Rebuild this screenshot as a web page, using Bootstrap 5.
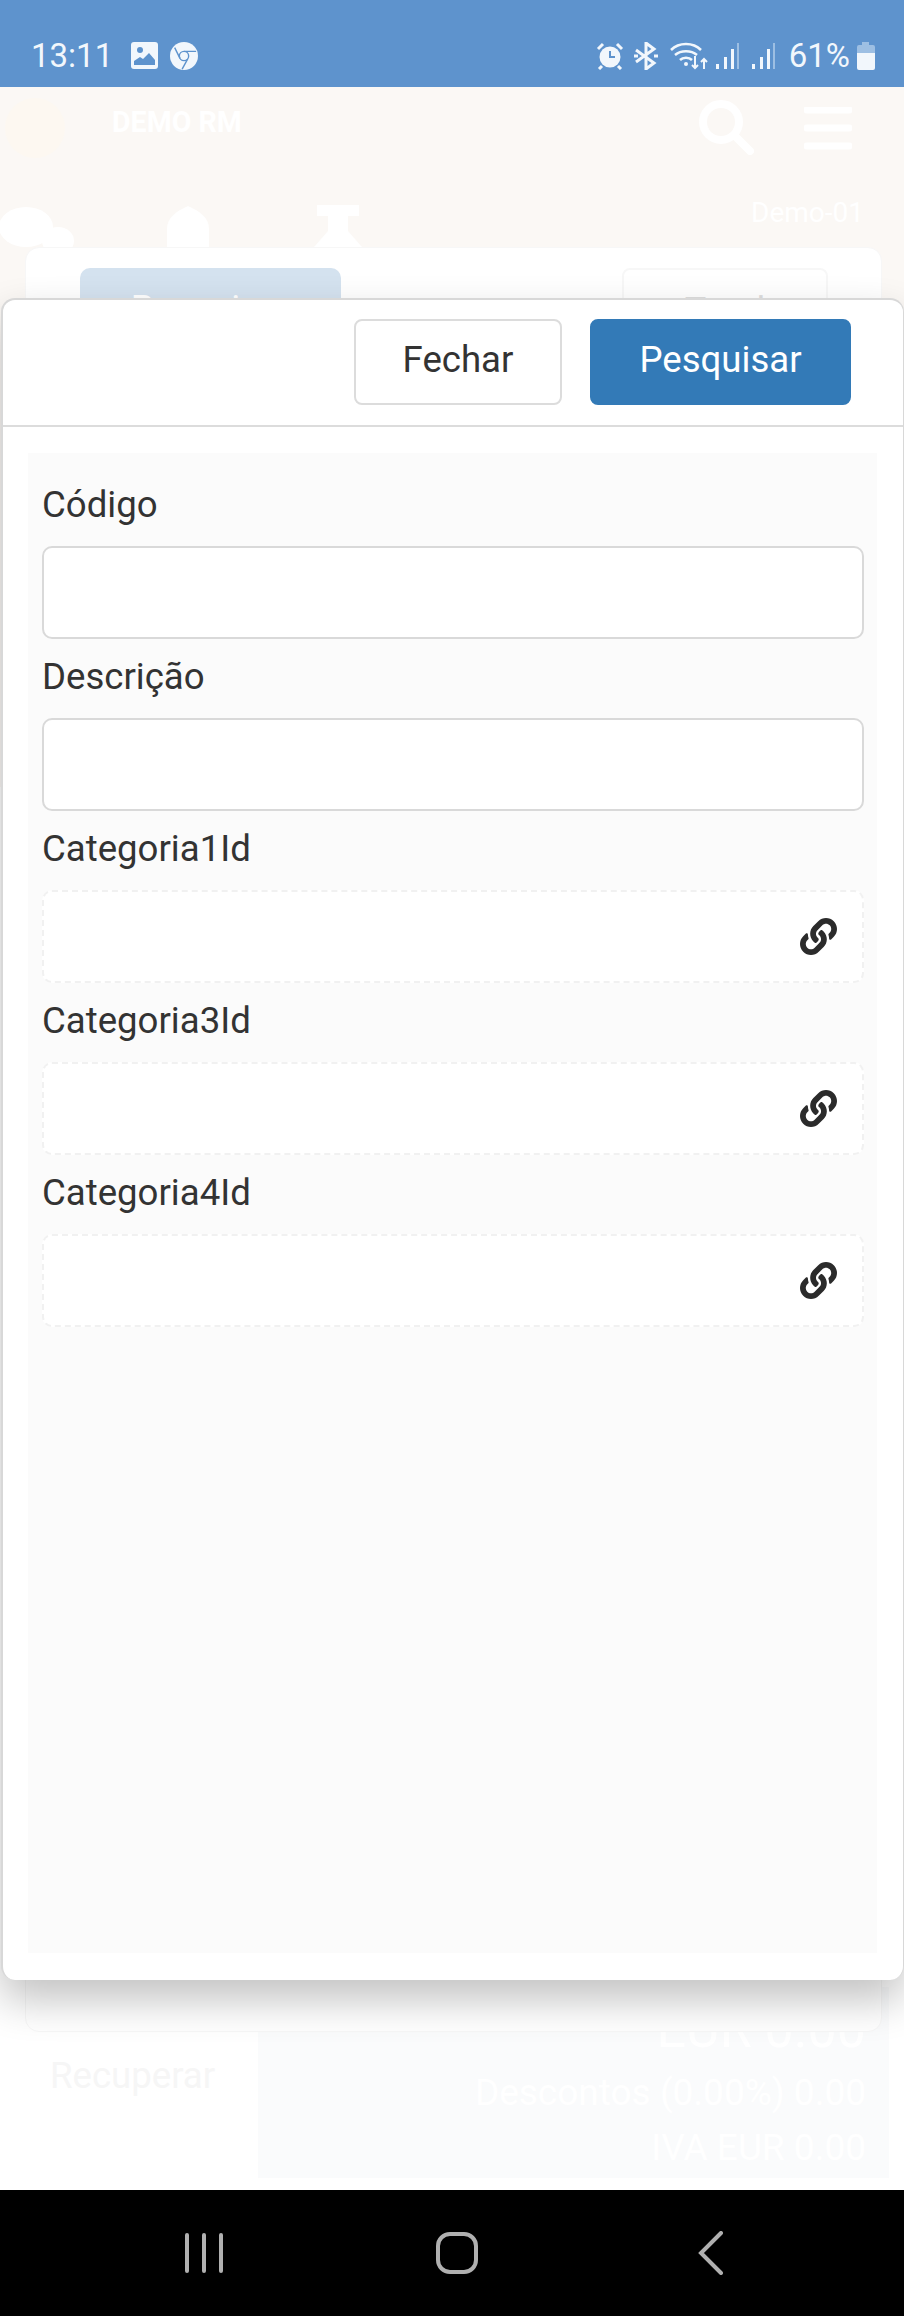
<!DOCTYPE html>
<html lang="pt">

<head>
    <meta charset="UTF-8" />
    <meta name="viewport" content="width=device-width, initial-scale=1" />
    <title>Pesquisar</title>
    <link href="https://cdn.jsdelivr.net/npm/bootstrap@5.3.0/dist/css/bootstrap.min.css" rel="stylesheet" />
    <style>
        html, body { height: 100%; }
        body { font-family: Roboto, "Liberation Sans", sans-serif; background: #fff; color: #333; overflow: hidden; }
        .phone-screen { width: 904px; height: 2316px; }
        .status-strip { height: 87px; background: #5e93cd; color: #f2f7fc; padding: 37px 28px 0 31px; font-size: 33px; line-height: 38px; }
        .status-strip svg { margin-top: 5px; flex-shrink: 0; }
        .st-image { margin-left: 18px; }
        .st-chrome { margin-left: 12px; }
        .st-bt { margin-left: 10px; }
        .st-wifi { margin-left: 12px; }
        .st-sig1 { margin-left: 7px; }
        .st-sig2 { margin-left: 12px; }
        .st-pct { margin-left: 14px; }
        .st-batt { margin-left: 6px; }

        .app-page { height: 2103px; }
        .app-top { height: 700px; background: #fbf8f5; color: #fff; }
        .app-title { left: 112px; top: 14px; font-size: 28.6px; font-weight: 700; }
        .demo-tag { right: 40px; top: 105px; font-size: 28px; }
        .bg-logo { left: 5px; top: 11px; width: 60px; height: 60px; border-radius: 50%; background: #fdf8f1; }
        .bg-search { left: 698px; top: 12px; }
        .bg-menu { left: 804px; top: 20px; }
        .bg-bubble { left: 0; top: 120px; }
        .bg-bell { left: 165px; top: 118px; }
        .bg-cup { left: 312px; top: 118px; }
        .bg-card { left: 25px; right: 22px; top: 160px; height: 1785px; background: #fff; border: 1px solid #f7f7f7; border-radius: 14px; }
        .bg-tab-on, .bg-tab-off { top: 20px; height: 70px; font-size: 36px; text-align: center; padding-top: 14px; }
        .bg-tab-on { left: 54px; width: 261px; background: #d4e2ef; border-radius: 10px 10px 0 0; color: #fff; }
        .bg-tab-off { left: 596px; width: 206px; border: 2px solid #f7f7f7; border-radius: 8px; color: #ddd; }
        .bg-totals { left: 258px; right: 15px; top: 1900px; height: 191px; background: #fafbfc; color: #fff; font-size: 37px; line-height: 55px; padding: 0 23px 3px 0; }
        .bg-total-main { font-size: 52px; margin-bottom: 8px; }
        .bg-recover { left: 50px; top: 1962px; font-size: 36.6px; color: #f6f6f6; }

        .search-sheet { left: 1px; right: 0; top: 211px; height: 1682px; background: #fff; border: 2px solid #d8d8d8; border-bottom: 0; border-right-width: 1px; border-radius: 14px; box-shadow: 0 20px 42px rgba(0, 0, 0, .24); }
        .sheet-head { height: 127px; padding: 19px 52px 0 0; border-bottom: 2px solid #dcdcdc; gap: 28px; }
        .sheet-btn { height: 86px; font-size: 36.6px; border-radius: 8px; padding-top: 3px; padding-bottom: 7px; }
        .btn-close-sheet { width: 208px; background: #fff; border: 2px solid #dcdcdc; color: #333; }
        .btn-search-sheet { width: 261px; background: #337ab7; border: 2px solid #337ab7; color: #fff; }
        .sheet-body { margin: 26px 26px 0 25px; height: 1500px; background: #fbfbfb; padding: 0 13px 0 14px; }
        .field-group { height: 172px; }
        .field-label { font-size: 36.6px; line-height: 40px; color: #333; height: 80px; padding-top: 32px; margin-bottom: 13px; }
        .field-input { height: 93px; border: 2px solid #d9d9d9; border-radius: 10px; background: #fff; box-shadow: none; }
        .field-lookup { height: 93px; border: 2px dashed #f1f1f1; border-radius: 10px; background: #fff; padding-right: 25px; }

        .nav-strip { height: 126px; background: #000; padding-left: 183px; }
        .nav-home { margin-left: 211px; }
        .nav-back { margin-left: 220px; }
    </style>
</head>

<body>
    <svg class="d-none">
        <symbol id="link-glyph" viewBox="0 0 512 512"><path d="M326.612 185.391c59.747 59.809 58.927 155.698.36 214.59-.11.12-.24.25-.36.37l-67.2 67.2c-59.27 59.27-155.699 59.262-214.96 0-59.27-59.26-59.27-155.7 0-214.96l37.106-37.106c9.84-9.84 26.786-3.3 27.294 10.606.648 17.722 3.826 35.527 9.69 52.721 1.986 5.822.567 12.262-3.783 16.612l-13.087 13.087c-28.026 28.026-28.905 73.66-1.155 101.96 28.024 28.579 74.086 28.749 102.325.51l67.2-67.19c28.191-28.191 28.073-73.757 0-101.83-3.701-3.694-7.429-6.564-10.341-8.569a16.037 16.037 0 0 1-6.947-12.606c-.396-10.567 3.348-21.456 11.698-29.806l21.054-21.055c5.521-5.521 14.182-6.199 20.584-1.731a152.482 152.482 0 0 1 20.522 17.197zM467.547 44.449c-59.261-59.262-155.69-59.27-214.96 0l-67.2 67.2c-.12.12-.25.25-.36.37-58.566 58.892-59.387 154.781.36 214.59a152.454 152.454 0 0 0 20.521 17.196c6.402 4.468 15.064 3.789 20.584-1.731l21.054-21.055c8.35-8.35 12.094-19.239 11.698-29.806a16.037 16.037 0 0 0-6.947-12.606c-2.912-2.005-6.64-4.875-10.341-8.569-28.073-28.073-28.191-73.639 0-101.83l67.2-67.19c28.239-28.239 74.3-28.069 102.325.51 27.75 28.3 26.872 73.934-1.155 101.96l-13.087 13.087c-4.35 4.35-5.769 10.79-3.783 16.612 5.864 17.194 9.042 34.999 9.69 52.721.509 13.906 17.454 20.446 27.294 10.606l37.106-37.106c59.271-59.259 59.271-155.699.001-214.959z" fill="#2b2b2b" /></symbol>
    </svg>

    <div class="phone-screen d-flex flex-column position-relative">
        <div class="status-strip d-flex justify-content-between">
            <div class="d-flex align-items-start">
                <span>13:11</span>
                <svg class="st-image" width="27" height="27" viewBox="0 0 27 27"><rect width="27" height="27" rx="3" fill="#f2f7fc" /><circle cx="9" cy="8" r="3" fill="#5e93cd" /><path d="M3 23v-4l6-4 3 2 6-6 6 7v5z" fill="#5e93cd" /></svg>
                <svg class="st-chrome" width="28" height="28" viewBox="0 0 30 30"><circle cx="15" cy="15" r="15" fill="#f2f7fc" /><circle cx="15" cy="15" r="5" fill="none" stroke="#5e93cd" stroke-width="1.5" /><path d="M15 10h13M10.7 17.5 5 6M19 18l-6 11" stroke="#5e93cd" stroke-width="1.5" fill="none" /></svg>
            </div>
            <div class="d-flex align-items-start">
                <svg width="28" height="28" viewBox="0 0 28 28"><circle cx="14" cy="15" r="10.5" fill="#f2f7fc" /><path d="M14 9v6h5" stroke="#5e93cd" stroke-width="2" fill="none" /><path d="M2 7l5-5M26 7l-5-5M6 24l-3 3M22 24l3 3" stroke="#f2f7fc" stroke-width="3" /></svg>
                <svg class="st-bt" width="24" height="28" viewBox="0 0 24 28"><path d="M2 8l18 13-8 6V1l8 6L2 20" fill="none" stroke="#f2f7fc" stroke-width="3" /><path d="M0 14h4M20 14h4" stroke="#f2f7fc" stroke-width="3" /></svg>
                <svg class="st-wifi" width="38" height="28" viewBox="0 0 38 28"><path d="M1 8c8-8 22-8 30 0M5 13c6-5 16-5 22 0M10 18c3-3 9-3 12 0" fill="none" stroke="#f2f7fc" stroke-width="2.5" /><circle cx="16" cy="22" r="2" fill="#f2f7fc" /><path d="M25 14v12m-3-3 3 3 3-3M34 27V17m-3 3 3-3 3 3" fill="none" stroke="#f2f7fc" stroke-width="2" /></svg>
                <svg class="st-sig1" width="24" height="28" viewBox="0 0 24 28"><path d="M1 22h3v5H1zM9 15h3v12H9zM16 7h3v20h-3z" fill="#f2f7fc" /><path d="M22 1h2v26h-2z" fill="#9dbfe3" /></svg>
                <svg class="st-sig2" width="24" height="28" viewBox="0 0 24 28"><path d="M1 22h3v5H1zM9 15h3v12H9zM16 7h3v20h-3z" fill="#f2f7fc" /><path d="M22 1h2v26h-2z" fill="#9dbfe3" /></svg>
                <span class="st-pct">61%</span>
                <svg class="st-batt" width="20" height="28" viewBox="0 0 20 28"><path d="M6 0h7v3h4a2 2 0 0 1 2 2v6H1V5a2 2 0 0 1 2-2h3z" fill="#9dbfe3" /><path d="M1 11h18v15a2 2 0 0 1-2 2H3a2 2 0 0 1-2-2z" fill="#f2f7fc" /></svg>
            </div>
        </div>

        <div class="app-page position-relative flex-grow-1">
            <div class="app-top position-relative">
                <div class="bg-logo position-absolute"></div>
                <div class="app-title position-absolute">DEMO RM</div>
                <svg class="bg-search position-absolute" width="56" height="56" viewBox="0 0 56 56"><circle cx="23" cy="23" r="18" fill="none" stroke="#fff" stroke-width="8" /><path d="M36 36l16 16" stroke="#fff" stroke-width="8" stroke-linecap="round" /></svg>
                <svg class="bg-menu position-absolute" width="48" height="44" viewBox="0 0 48 44"><path d="M3 3h42M3 21h42M3 39h42" stroke="#fff" stroke-width="7" stroke-linecap="round" /></svg>
                <div class="demo-tag position-absolute">Demo-01</div>
                <svg class="bg-bubble position-absolute" width="76" height="40" viewBox="0 0 76 40"><ellipse cx="26" cy="20" rx="27" ry="20" fill="#fff" /><ellipse cx="58" cy="34" rx="16" ry="14" fill="#fff" /></svg>
                <svg class="bg-bell position-absolute" width="46" height="42" viewBox="0 0 46 42"><path d="M2 42V24C2 12 12 6 23 1c11 5 21 11 21 23v18z" fill="#fff" /></svg>
                <svg class="bg-cup position-absolute" width="52" height="42" viewBox="0 0 52 42"><path d="M5 0h42v11H36v15l14 16H2l14-16V11H5z" fill="#fff" /></svg>
            </div>

            <div class="bg-recover position-absolute">Recuperar</div>
            <div class="bg-totals position-absolute d-flex flex-column justify-content-end text-end">
                <div class="bg-total-main">EUR 0.00</div>
                <div>Descontos (0.00%) 0.00</div>
                <div>IVA EUR 0.00</div>
            </div>
            <div class="bg-card position-absolute">
                <div class="bg-tab-on position-absolute">Pesquisar</div>
                <div class="bg-tab-off position-absolute">Total</div>
            </div>

            <div class="search-sheet position-absolute">
                <div class="sheet-head d-flex justify-content-end">
                    <button type="button" class="btn sheet-btn btn-close-sheet">Fechar</button>
                    <button type="button" class="btn sheet-btn btn-search-sheet">Pesquisar</button>
                </div>
                <form class="sheet-body">
                    <div class="field-group">
                        <label class="form-label field-label d-block">Código</label>
                        <input type="text" class="form-control field-input" />
                    </div>
                    <div class="field-group">
                        <label class="form-label field-label d-block">Descrição</label>
                        <input type="text" class="form-control field-input" />
                    </div>
                    <div class="field-group">
                        <label class="form-label field-label d-block">Categoria1Id</label>
                        <div class="field-lookup d-flex align-items-center justify-content-end">
                            <svg width="37" height="37"><use href="#link-glyph" /></svg>
                        </div>
                    </div>
                    <div class="field-group">
                        <label class="form-label field-label d-block">Categoria3Id</label>
                        <div class="field-lookup d-flex align-items-center justify-content-end">
                            <svg width="37" height="37"><use href="#link-glyph" /></svg>
                        </div>
                    </div>
                    <div class="field-group">
                        <label class="form-label field-label d-block">Categoria4Id</label>
                        <div class="field-lookup d-flex align-items-center justify-content-end">
                            <svg width="37" height="37"><use href="#link-glyph" /></svg>
                        </div>
                    </div>
                </form>
            </div>
        </div>

        <div class="nav-strip d-flex align-items-center flex-shrink-0">
            <svg width="42" height="42" viewBox="0 0 42 42"><path d="M4 3v36M21 3v36M38 3v36" stroke="#b0b0b0" stroke-width="4" stroke-linecap="round" /></svg>
            <svg class="nav-home" width="42" height="42" viewBox="0 0 42 42"><rect x="2" y="2" width="38" height="38" rx="12" fill="none" stroke="#b0b0b0" stroke-width="4" /></svg>
            <svg class="nav-back" width="26" height="44" viewBox="0 0 26 44"><path d="M23 2 3 22l20 20" fill="none" stroke="#b0b0b0" stroke-width="4" stroke-linecap="round" /></svg>
        </div>
    </div>
    <script src="https://cdn.jsdelivr.net/npm/bootstrap@5.3.0/dist/js/bootstrap.bundle.min.js"></script>
</body>

</html>
